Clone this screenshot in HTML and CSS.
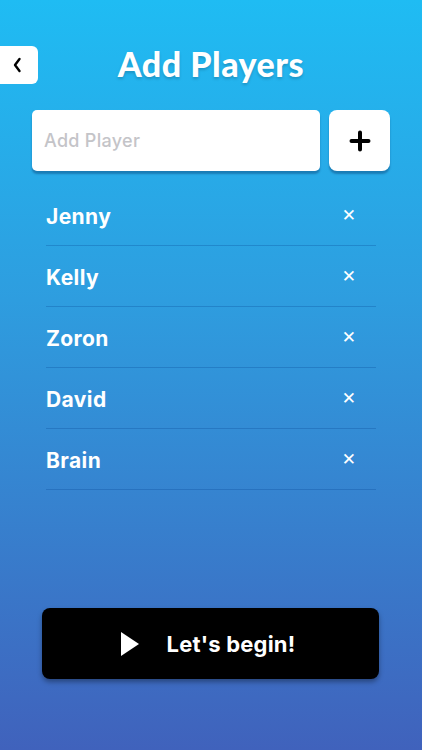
FILE: index.html
```html
<!DOCTYPE html>
<html lang="en">
  <head>
    <meta charset="utf-8">
    <meta name="viewport" content="width=device-width, initial-scale=1">
    <link rel="stylesheet" href="styles.css">
  </head>
  <body>
    <div class="screen">
      <header class="top">
        <button class="back" aria-label="Back">
          <svg width="10" height="16" viewBox="0 0 10 16"><path d="M7.5 2 L3 8 L7.5 14" fill="none" stroke="#000" stroke-width="2.4" stroke-linecap="round" stroke-linejoin="round"/></svg>
        </button>
        <h1>Add Players</h1>
      </header>

      <div class="add-row">
        <input class="add-input" type="text" placeholder="Add Player">
        <button class="add-btn" aria-label="Add">
          <svg width="22" height="22" viewBox="0 0 22 22"><path d="M11 2.5 V19.5 M2.5 11 H19.5" stroke="#000" stroke-width="4" stroke-linecap="round"/></svg>
        </button>
      </div>

      <ul class="players">
        <li><span>Jenny</span><button class="remove">&#x2715;</button></li>
        <li><span>Kelly</span><button class="remove">&#x2715;</button></li>
        <li><span>Zoron</span><button class="remove">&#x2715;</button></li>
        <li><span>David</span><button class="remove">&#x2715;</button></li>
        <li><span>Brain</span><button class="remove">&#x2715;</button></li>
      </ul>

      <button class="begin">
        <svg width="20" height="24" viewBox="0 0 20 24"><path d="M1 0 L19 12 L1 24 Z" fill="#fff"/></svg>
        <span>Let's begin!</span>
      </button>
    </div>
  </body>
</html>
```

FILE: styles.css
```css
html, body {
  margin: 0;
  height: 100%;
}
body {
  font-family: Inter, "Open Sans", sans-serif;
  background: linear-gradient(to bottom, #1fbcf3 0%, #2e9ddf 40%, #4062bc 100%);
}
.screen {
  height: 750px;
  display: flex;
  flex-direction: column;
  box-sizing: border-box;
  padding-top: 46px;
}
.top {
  position: relative;
  height: 38px;
  display: flex;
  justify-content: center;
  align-items: center;
}
.back {
  position: absolute;
  left: 0;
  top: 0;
  width: 38px;
  height: 38px;
  border: 0;
  background: #fff;
  border-radius: 0 6px 6px 0;
  display: flex;
  align-items: center;
  justify-content: center;
  padding: 0 4px 0 0;
}
h1 {
  margin: 0;
  color: #fff;
  font-family: Lato, sans-serif;
  font-weight: 900;
  font-size: 34px;
  letter-spacing: 0.5px;
  text-shadow: 0 2px 3px rgba(0, 0, 0, 0.18);
  margin-top: -4px;
}
.add-row {
  display: flex;
  gap: 9px;
  margin: 26px 32px 0 32px;
  height: 61px;
}
.add-input {
  flex: 1 1 0;
  min-width: 0;
  border: 0;
  border-radius: 5px;
  background: #fff;
  box-shadow: 0 3px 2px rgba(0, 40, 90, 0.35);
  padding: 0 12px;
  font-family: Inter, sans-serif;
  font-size: 18px;
  font-weight: 500;
  letter-spacing: 0.3px;
  outline: none;
}
.add-input::placeholder {
  color: #c4c4c8;
}
.add-btn {
  flex: none;
  width: 61px;
  border: 0;
  border-radius: 8px;
  background: #fff;
  box-shadow: 0 3px 2px rgba(0, 40, 90, 0.35);
  display: flex;
  align-items: center;
  justify-content: center;
}
.players {
  list-style: none;
  margin: 14px 46px 0 46px;
  padding: 0;
}
.players li {
  height: 60px;
  border-bottom: 1px solid rgba(0, 60, 140, 0.25);
  display: flex;
  align-items: center;
  justify-content: space-between;
  color: #fff;
  font-weight: 700;
  font-size: 21px;
  letter-spacing: 0.4px;
}
.players li span {
  padding-top: 2px;
}
.remove {
  border: 0;
  background: none;
  color: #fff;
  font-size: 17px;
  font-weight: 700;
  padding: 0;
  margin-right: 20px;
  font-family: "DejaVu Sans", sans-serif;
}
.begin {
  margin: auto 43px 71px 42px;
  height: 71px;
  border: 0;
  border-radius: 8px;
  background: #000;
  color: #fff;
  box-shadow: 0 3px 5px rgba(0, 0, 0, 0.35);
  display: flex;
  align-items: center;
  justify-content: center;
  gap: 27px;
  font-family: Inter, sans-serif;
  font-size: 22px;
  font-weight: 700;
  letter-spacing: 0.2px;
  padding-right: 12px;
}
```
